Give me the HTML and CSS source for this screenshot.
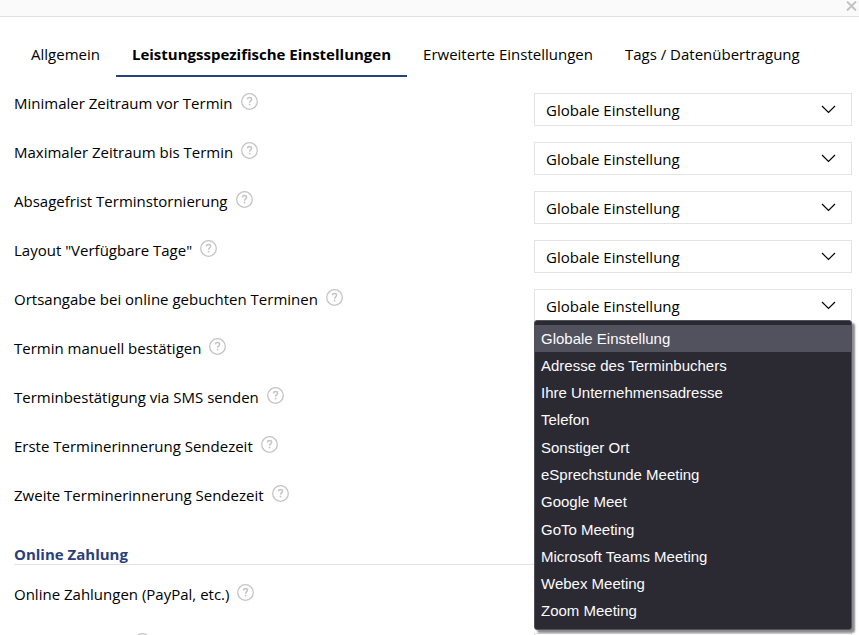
FILE: index.html
```html
<!DOCTYPE html>
<html lang="de">
<head>
  <meta charset="UTF-8">
  <meta name="viewport" content="width=device-width, initial-scale=1.0">
  <title>Leistungsspezifische Einstellungen</title>
  <link rel="stylesheet" href="styles.css">
</head>
<body>

<svg class="sprite" aria-hidden="true">
  <symbol id="help" viewBox="0 0 17 17">
    <circle cx="8.5" cy="8.5" r="7.8" fill="none" stroke="#c4c4c4" stroke-width="1.3"/>
    <path d="M6.4 6.4C6.5 5.2 7.3 4.6 8.5 4.6c1.2 0 2.1.7 2.1 1.7 0 1.6-2 1.6-2 3.4" fill="none" stroke="#c4c4c4" stroke-width="1.5"/>
    <rect x="7.8" y="10.8" width="1.6" height="1.6" fill="#c4c4c4"/>
  </symbol>
</svg>

<header class="dialog-header">
  <button class="close" type="button" aria-label="Schließen">
    <svg width="11" height="10" viewBox="0 0 11 10"><path d="M1 0.5L10 9.5M10 0.5L1 9.5" stroke="#c3c3c3" stroke-width="2"/></svg>
  </button>
</header>

<nav class="tabs">
  <a href="#allgemein">Allgemein</a>
  <a href="#leistung" class="active">Leistungsspezifische Einstellungen</a>
  <a href="#erweitert">Erweiterte Einstellungen</a>
  <a href="#tags">Tags / Datenübertragung</a>
</nav>

<form class="settings" id="leistung">
  <div class="row">
    <div class="name"><label for="min">Minimaler Zeitraum vor Termin</label><svg class="help"><use href="#help"/></svg></div>
    <div class="field"><select id="min"><option>Globale Einstellung</option></select></div>
  </div>
  <div class="row">
    <div class="name"><label for="max">Maximaler Zeitraum bis Termin</label><svg class="help"><use href="#help"/></svg></div>
    <div class="field"><select id="max"><option>Globale Einstellung</option></select></div>
  </div>
  <div class="row">
    <div class="name"><label for="storno">Absagefrist Terminstornierung</label><svg class="help"><use href="#help"/></svg></div>
    <div class="field"><select id="storno"><option>Globale Einstellung</option></select></div>
  </div>
  <div class="row">
    <div class="name"><label for="layout">Layout "Verfügbare Tage"</label><svg class="help"><use href="#help"/></svg></div>
    <div class="field"><select id="layout"><option>Globale Einstellung</option></select></div>
  </div>
  <div class="row">
    <div class="name"><label for="ort">Ortsangabe bei online gebuchten Terminen</label><svg class="help"><use href="#help"/></svg></div>
    <div class="field">
      <select id="ort"><option>Globale Einstellung</option></select>
      <ul class="menu" role="listbox" aria-label="Ortsangabe">
        <li role="option" aria-selected="true">Globale Einstellung</li>
        <li role="option">Adresse des Terminbuchers</li>
        <li role="option">Ihre Unternehmensadresse</li>
        <li role="option">Telefon</li>
        <li role="option">Sonstiger Ort</li>
        <li role="option">eSprechstunde Meeting</li>
        <li role="option">Google Meet</li>
        <li role="option">GoTo Meeting</li>
        <li role="option">Microsoft Teams Meeting</li>
        <li role="option">Webex Meeting</li>
        <li role="option">Zoom Meeting</li>
      </ul>
    </div>
  </div>
  <div class="row">
    <div class="name"><label for="manuell">Termin manuell bestätigen</label><svg class="help"><use href="#help"/></svg></div>
    <div class="field"><select id="manuell"><option>Globale Einstellung</option></select></div>
  </div>
  <div class="row">
    <div class="name"><label for="sms">Terminbestätigung via SMS senden</label><svg class="help"><use href="#help"/></svg></div>
    <div class="field"><select id="sms"><option>Globale Einstellung</option></select></div>
  </div>
  <div class="row">
    <div class="name"><label for="erste">Erste Terminerinnerung Sendezeit</label><svg class="help"><use href="#help"/></svg></div>
    <div class="field"><select id="erste"><option>Globale Einstellung</option></select></div>
  </div>
  <div class="row">
    <div class="name"><label for="zweite">Zweite Terminerinnerung Sendezeit</label><svg class="help"><use href="#help"/></svg></div>
    <div class="field"><select id="zweite"><option>Globale Einstellung</option></select></div>
  </div>

  <h2>Online Zahlung</h2>
  <div class="row">
    <div class="name"><label for="zahlung">Online Zahlungen (PayPal, etc.)</label><svg class="help"><use href="#help"/></svg></div>
    <div class="field"><select id="zahlung"><option>Globale Einstellung</option></select></div>
  </div>
  <div class="row">
    <div class="name"><label for="anbieter" class="blank"></label><svg class="help"><use href="#help"/></svg></div>
    <div class="field"><select id="anbieter" aria-label="Zahlungsanbieter"></select></div>
  </div>
</form>

</body>
</html>
```
FILE: styles.css
```css
* {
  box-sizing: border-box;
}
body {
  margin: 0;
  height: 100vh;
  overflow: hidden;
  font-family: "Open Sans", sans-serif;
  font-size: 15px;
  line-height: 20px;
  color: #000;
  background-color: #fff;
}
.sprite {
  display: none;
}
.dialog-header {
  display: flex;
  justify-content: flex-end;
  height: 17px;
  padding: 1px 2px;
  background-color: #fafafa;
  border-bottom: 1px solid #e0e0e0;
}
.close {
  display: flex;
  height: 10px;
  padding: 0;
  border: none;
  background: none;
}
.tabs {
  display: flex;
  padding: 16px 15px 0;
}
.tabs a {
  padding: 11px 16px;
  border-bottom: 2px solid transparent;
  color: #000;
  text-decoration: none;
  white-space: nowrap;
}
.tabs a.active {
  font-weight: bold;
  border-bottom-color: #29417a;
}
.settings {
  padding: 16px 7px 0 14px;
}
.row {
  display: grid;
  grid-template-columns: 1fr 318px;
  margin-bottom: 16px;
}
.name {
  display: flex;
  align-items: flex-start;
  gap: 8px;
}
.blank {
  width: 112px;
}
.help {
  width: 17px;
  height: 17px;
}
.field {
  position: relative;
}
select {
  display: block;
  width: 100%;
  height: 33px;
  padding: 0 11px;
  border: 1px solid #e3e3e3;
  border-radius: 0;
  appearance: none;
  font: inherit;
  color: #000;
  background: #fff url("data:image/svg+xml,%3Csvg xmlns='http://www.w3.org/2000/svg' width='15' height='9'%3E%3Cpath d='M1 1l6.5 6.5L14 1' fill='none' stroke='%23000' stroke-width='1.2'/%3E%3C/svg%3E") no-repeat right 15px center;
}
.menu {
  position: absolute;
  top: 31px;
  left: 0;
  z-index: 1;
  display: grid;
  grid-auto-rows: 1fr;
  width: 100%;
  height: 310px;
  margin: 0;
  padding: 4px 0;
  list-style: none;
  border: 1px solid #52525e;
  border-radius: 3px;
  font-family: "Liberation Sans", Arial, sans-serif;
  color: #fbfbfe;
  background-color: #2b2a33;
  box-shadow: 3px 3px 2px rgba(0, 0, 0, 0.45);
}
.menu li {
  display: flex;
  align-items: center;
  padding: 0 6px;
}
.menu li[aria-selected="true"] {
  background-color: #52525e;
}
h2 {
  margin: 26px 0 19px;
  border-bottom: 1px solid #e3e3e3;
  font-size: 15px;
  line-height: 20px;
  color: #29417a;
}
```
